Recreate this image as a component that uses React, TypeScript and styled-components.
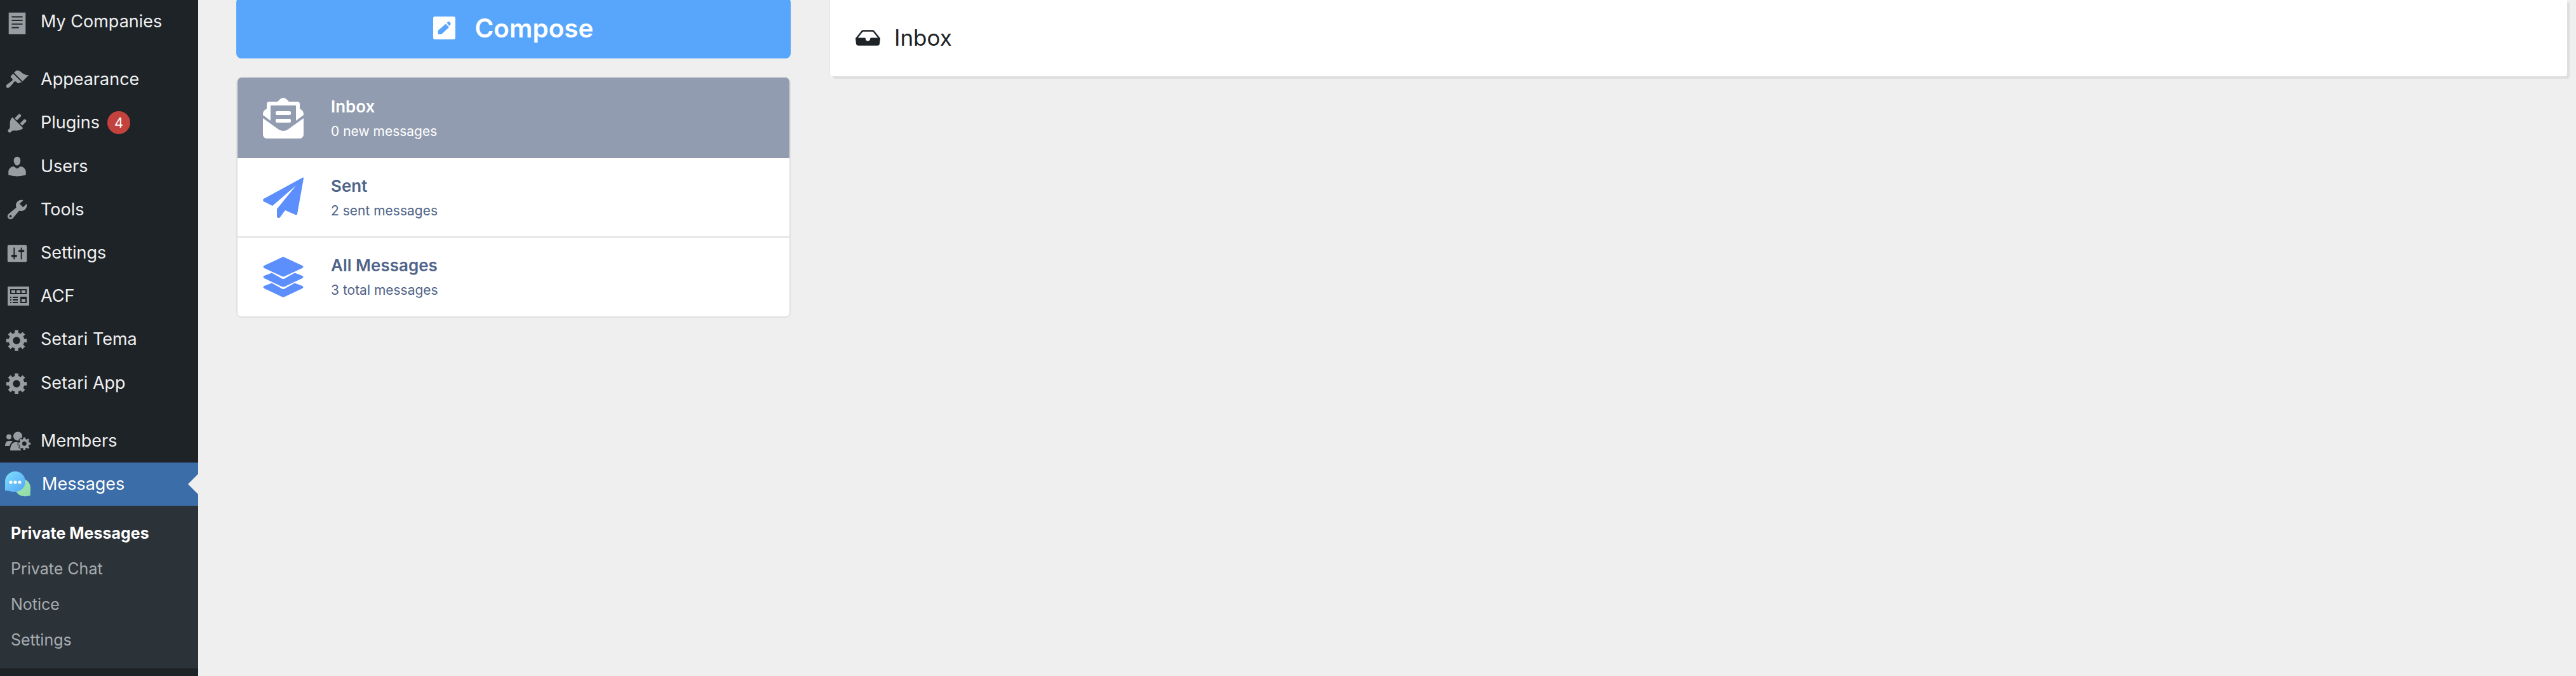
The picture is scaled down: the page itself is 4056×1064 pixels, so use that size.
import React from 'react';
import styled, { createGlobalStyle } from 'styled-components';
import { BsInboxFill } from 'react-icons/bs';

const GlobalStyle = createGlobalStyle`
  html, body {
    margin: 0;
    padding: 0;
    height: 1064px;
    overflow: hidden;
    background: #efefef;
    font-family: Inter, "Liberation Sans", sans-serif;
  }
`;

const Page = styled.div`
  display: flex;
  width: 4056px;
  height: 1064px;
  overflow: hidden;
`;

const Sidebar = styled.nav`
  flex: 0 0 312px;
  height: 1064px;
  background: #1d2327;
`;

const MenuGroup = styled.div`
  margin-bottom: 23px;
`;

const MenuRow = styled.div<{ $active?: boolean }>`
  position: relative;
  display: flex;
  align-items: center;
  height: 68.2px;
  box-sizing: border-box;
  padding: 0 0 1px 8px;
  gap: 18px;
  font-size: 27px;
  color: ${p => (p.$active ? '#fff' : '#f0f0f1')};
  background: ${p => (p.$active ? '#3b6ea9' : 'transparent')};

  svg {
    flex: 0 0 38px;
    width: 38px;
    height: 38px;
    margin-top: 2px;
    fill: #999da2;
    overflow: visible;
  }
`;

const Badge = styled.span`
  display: flex;
  align-items: center;
  justify-content: center;
  width: 36px;
  height: 36px;
  margin-left: -6px;
  border-radius: 50%;
  background: #c4423d;
  color: #fff;
  font-size: 22px;
`;

const Arrow = styled.span`
  position: absolute;
  right: 0;
  top: 18px;
  border: 16px solid transparent;
  border-left: 0;
  border-right-color: #efefef;
`;

const SubMenu = styled.div`
  display: flex;
  flex-direction: column;
  height: 256px;
  padding: 15px 0 0 17px;
  box-sizing: border-box;
  background: #2c3338;
`;

const SubItem = styled.div<{ $current?: boolean }>`
  height: 56px;
  line-height: 56px;
  font-size: 25px;
  font-weight: ${p => (p.$current ? 700 : 400)};
  color: ${p => (p.$current ? '#fff' : '#a7acb1')};
`;

const Content = styled.main`
  flex: 1;
  display: grid;
  grid-template-columns: 873px 1fr;
  column-gap: 62px;
  align-items: start;
  padding: 0 14px 0 60px;
`;

const LeftColumn = styled.div`
  display: flex;
  flex-direction: column;
  gap: 30px;
  margin-top: -4px;
`;

const ComposeButton = styled.div`
  display: flex;
  align-items: center;
  justify-content: center;
  gap: 30px;
  height: 96px;
  border-radius: 8px;
  background: #58a6fb;
  color: #fff;
  font-size: 40.5px;
  font-weight: 600;

  svg {
    width: 35px;
    height: 36px;
  }
`;

const FolderCard = styled.div`
  display: flex;
  flex-direction: column;
  border-radius: 8px;
  border: 2px solid #e0e0e0;
  border-top: 0;
  background: #fff;
  overflow: hidden;
`;

const FolderRow = styled.div<{ $active?: boolean; $height: number }>`
  display: flex;
  align-items: center;
  gap: 43px;
  height: ${p => p.$height}px;
  box-sizing: border-box;
  background: ${p => (p.$active ? '#919cb0' : '#fff')};
  color: ${p => (p.$active ? '#fff' : '#4f6489')};
  margin: ${p => (p.$active ? '0 -2px' : '0')};
  padding-left: ${p => (p.$active ? '42px' : '40px')};

  & + & + & {
    border-top: 2px solid #e0e0e0;
  }

  svg {
    flex: 0 0 64px;
    width: 64px;
    height: 64px;
    fill: ${p => (p.$active ? '#fff' : '#5d8ffc')};
  }
`;

const FolderText = styled.div`
  display: flex;
  flex-direction: column;
  gap: 12px;
  margin-top: 1px;
`;

const FolderTitle = styled.div`
  font-size: 26px;
  font-weight: 600;
  line-height: 28px;
`;

const FolderSub = styled.div`
  font-size: 21px;
  line-height: 25px;
`;

const Panel = styled.section`
  display: flex;
  align-items: center;
  gap: 22px;
  height: 120px;
  box-sizing: border-box;
  padding: 0 0 2px 40px;
  background: #fff;
  box-shadow: 4px 4px 0 #dfdfdf, -1px 0 0 #e4e4e4;
  border-radius: 0 0 4px 4px;
  color: #1d2327;
  font-size: 35px;

  svg {
    width: 39px;
    height: 39px;
  }
`;

const GEAR = 'M18 12h-2.18c-.17.7-.44 1.35-.81 1.93l1.54 1.54-2.1 2.1-1.54-1.54c-.58.36-1.23.63-1.91.79V19H8v-2.18c-.68-.16-1.33-.43-1.91-.79l-1.54 1.54-2.12-2.12 1.54-1.54c-.36-.58-.63-1.23-.79-1.91H1V9.03h2.17c.16-.7.44-1.35.8-1.94L2.43 5.55l2.1-2.1 1.54 1.54c.58-.37 1.24-.64 1.93-.81V2h3v2.18c.68.16 1.33.43 1.91.79l1.54-1.54 2.12 2.12-1.54 1.54c.36.59.64 1.24.8 1.94H18V12zm-8.5 1.5c1.66 0 3-1.34 3-3s-1.34-3-3-3-3 1.34-3 3 1.34 3 3 3z';

const Dash = ({ d }: { d: string }) => (
  <svg viewBox="0 0 20 20">
    <path fillRule="evenodd" d={d} />
  </svg>
);

const ICONS: Record<string, string> = {
  doc: 'M3 2h14v18H3zM5.500 5v1h9V5zm0 3v1h9V8zm0 3v1h9v-1zm0 3v1h6v-1z',
  brush: 'M14.48 11.06L7.41 3.99l1.5-1.5c.5-.56 2.3-.47 3.51.32 1.21.8 1.43 1.28 2.91 2.1 1.18.64 2.45 1.26 4.45.85zm-.71.71L6.7 4.7 4.93 6.47c-.39.39-.39 1.02 0 1.41l1.06 1.06c.39.39.39 1.03 0 1.42-.6.6-1.43 1.11-2.21 1.69-.35.26-.7.53-1.01.84C1.43 13.23.4 15.1 1.2 16.1c.78.99 2.65-.05 3.96-1.59.28-.3.56-.67.84-1.03.57-.76 1.08-1.57 1.68-2.17.39-.39 1.02-.39 1.41 0l1.06 1.06c.39.39 1.02.39 1.41 0z',
  plug: 'M13.11 4.36L9.87 7.6 8 5.73l3.24-3.24c.35-.34 1.05-.2 1.56.32.52.51.66 1.21.31 1.55zm-8 1.77l.91-1.12 9.01 9.01-1.19.84c-.71.71-2.63 1.16-3.82 1.16H6.14L4.9 17.26c-.59.59-1.54.59-2.12 0-.59-.58-.59-1.53 0-2.12l1.24-1.24v-3.88c0-1.13.4-3.19 1.09-3.89zm7.26 3.97l3.24-3.24c.34-.35 1.04-.21 1.55.31.52.51.66 1.21.31 1.55l-3.24 3.25z',
  user: 'M10 9.25c-2.27 0-2.73-3.44-2.73-3.44C7 4.02 7.82 2 9.97 2c2.16 0 2.98 2.02 2.71 3.81 0 0-.41 3.44-2.68 3.44zm0 2.57L12.72 10c2.39 0 4.52 2.33 4.52 4.53v2.49s-3.65 1.13-7.24 1.13c-3.65 0-7.24-1.13-7.24-1.13v-2.49c0-2.25 1.94-4.48 4.47-4.48z',
  wrench: 'M16.68 9.77c-1.34 1.34-3.3 1.67-4.95.99l-5.41 6.52c-.99.99-2.59.99-3.58 0s-.99-2.59 0-3.57l6.52-5.42c-.68-1.65-.35-3.61.99-4.95 1.28-1.28 3.12-1.62 4.72-1.06l-2.89 2.89 2.82 2.82 2.86-2.87c.53 1.58.18 3.39-1.08 4.65zM3.81 16.21c.4.39 1.04.39 1.43 0 .4-.4.4-1.04 0-1.43-.39-.4-1.03-.4-1.43 0-.39.39-.39 1.03 0 1.43z',
  sliders: 'M18 16V4c0-.55-.45-1-1-1H3c-.55 0-1 .45-1 1v12c0 .55.45 1 1 1h14c.55 0 1-.45 1-1zM8 11h1c.55 0 1 .45 1 1s-.45 1-1 1H8v1.5c0 .28-.22.5-.5.5s-.5-.22-.5-.5V13H6c-.55 0-1-.45-1-1s.45-1 1-1h1V5.500c0-.28.22-.5.5-.5s.5.22.5.5V11zm5-2h-1c-.55 0-1-.45-1-1s.45-1 1-1h1V5.500c0-.28.22-.5.5-.5s.5.22.5.5V7h1c.55 0 1 .45 1 1s-.45 1-1 1h-1v5.500c0 .28-.22.5-.5.5s-.5-.22-.5-.5V9z',
  gear: GEAR,
};

const AcfIcon = () => (
  <svg viewBox="0 0 38 38">
    <path
      fillRule="evenodd"
      d="M5 3h32a1 1 0 0 1 1 1v28a1 1 0 0 1-1 1H5a1 1 0 0 1-1-1V4a1 1 0 0 1 1-1zM8 7v8h26V7zM10 9h6v4h-6zM18 9h6v4h-6zM26 9h6v4h-6zM8 19v2h2v-2zM12 19v2h8v-2zM8 23v2h2v-2zM12 23v2h8v-2zM8 27v2h2v-2zM12 27v2h8v-2zM24 19v10h10V19zM26 23h6v4h-6z"
    />
  </svg>
);

const MembersIcon = () => (
  <svg viewBox="0 0 38 38">
    <circle cx="20" cy="11.500" r="7" />
    <circle cx="6" cy="12.500" r="4" />
    <path d="M0 27c0-4 2-8 5-8h4c1 0 2 .5 3 1-3 2-4 4-5 7z" />
    <path d="M8 34c0-7 3-13 8-13h4c3 0 5 3 5 13z" />
    <path
      fillRule="evenodd"
      stroke="#1d2327"
      strokeWidth="1.600"
      paintOrder="stroke"
      transform="translate(19.400 11.200) scale(1.150)"
      d={GEAR}
    />
  </svg>
);

const MessagesIcon = () => (
  <svg viewBox="0 0 40 40" style={{ flex: '0 0 40px', width: 40, height: 40 }}>
    <defs>
      <linearGradient id="msgBlue" x1="0" y1="0" x2="1" y2="1">
        <stop offset="0" stopColor="#7fe0fb" />
        <stop offset="1" stopColor="#52a3f7" />
      </linearGradient>
      <linearGradient id="msgGreen" x1="0" y1="0" x2="1" y2="1">
        <stop offset="0" stopColor="#a5e6b2" />
        <stop offset="1" stopColor="#8fdca9" />
      </linearGradient>
    </defs>
    <path style={{ fill: 'url(#msgGreen)' }} d="M25 12c8-1 15 5 15 14l-.3 12c-3 1-7 1.500-10 1-5 0-10-3-13-8z" />
    <path style={{ fill: 'url(#msgBlue)' }} d="M16 0c9 0 16 7 16 16s-7 16-16 16c-4 0-7-.5-11-1.500L0 30V16C0 7 7 0 16 0z" />
    <circle style={{ fill: '#fff' }} cx="9" cy="17" r="2.600" />
    <circle style={{ fill: '#fff' }} cx="16" cy="17" r="2.600" />
    <circle style={{ fill: '#fff' }} cx="23" cy="17" r="2.600" />
  </svg>
);

const ComposeIcon = () => (
  <svg viewBox="0 0 35 36">
    <path
      fill="#fff"
      fillRule="evenodd"
      d="M3 0h29a3 3 0 0 1 3 3v30a3 3 0 0 1-3 3H3a3 3 0 0 1-3-3V3a3 3 0 0 1 3-3zM7.700 22V28H13L25 17 20 11.500zM21.500 9.800L25.500 15 27 13Q28 12 27.500 10.500L26 8.500Q25 7.500 24 8z"
    />
  </svg>
);

const EnvelopeIcon = () => (
  <svg viewBox="0 0 64 64">
    <path fillRule="evenodd" d="M32 0Q35 0 37 2L41 6H54a4 4 0 0 1 4 4V17L62 20Q64 22 64 25V27L52 36V12H12V36L0 27V25Q0 22 2 20L6 17V10a4 4 0 0 1 4-4H23L27 2Q29 0 32 0Z" />
    <path d="M0 32L25 50Q32 54 39 50L64 32V58a6 6 0 0 1-6 6H6a6 6 0 0 1-6-6Z" />
    <rect x="20" y="21" width="24" height="6" rx="2" />
    <rect x="20" y="33" width="24" height="6" rx="2" />
  </svg>
);

const PlaneIcon = () => (
  <svg viewBox="0 0 64 64">
    <path d="M62.500 .5Q64.500 0 64 2L54 58Q53.500 60 51 59L35 52L27 63Q24 66 22 62V50L52 13L15 45L1 38Q-1 36 1 34Z" />
  </svg>
);

const LayersIcon = () => (
  <svg viewBox="0 0 64 64">
    <path d="M29.500 1.200Q32 0 34.500 1.200L62 14Q65 16 62 18L34.500 30.800Q32 32 29.500 30.800L2 18Q-1 16 2 14Z" />
    <path d="M14 25.500L30 34.500Q32 35.500 34 34.500L50 25.500L62 30Q65 32 62 34L34.500 47Q32 48 29.500 47L2 34Q-1 32 2 30Z" />
    <path d="M14 41.500L30 50.500Q32 51.500 34 50.500L50 41.500L62 46Q65 48 62 50L34.500 63Q32 64 29.500 63L2 50Q-1 48 2 46Z" />
  </svg>
);

const FOLDERS = [
  { title: 'Inbox', sub: '0 new messages', icon: <EnvelopeIcon />, height: 127, active: true },
  { title: 'Sent', sub: '2 sent messages', icon: <PlaneIcon />, height: 123 },
  { title: 'All Messages', sub: '3 total messages', icon: <LayersIcon />, height: 126 },
];

const App = () => (
  <Page>
    <GlobalStyle />
    <Sidebar>
      <MenuGroup>
        <MenuRow><Dash d={ICONS.doc} />My Companies</MenuRow>
      </MenuGroup>
      <MenuGroup>
        <MenuRow><Dash d={ICONS.brush} />Appearance</MenuRow>
        <MenuRow><Dash d={ICONS.plug} />Plugins<Badge>4</Badge></MenuRow>
        <MenuRow><Dash d={ICONS.user} />Users</MenuRow>
        <MenuRow><Dash d={ICONS.wrench} />Tools</MenuRow>
        <MenuRow><Dash d={ICONS.sliders} />Settings</MenuRow>
        <MenuRow><AcfIcon />ACF</MenuRow>
        <MenuRow><Dash d={ICONS.gear} />Setari Tema</MenuRow>
        <MenuRow><Dash d={ICONS.gear} />Setari App</MenuRow>
      </MenuGroup>
      <MenuRow><MembersIcon />Members</MenuRow>
      <MenuRow $active><MessagesIcon />Messages<Arrow /></MenuRow>
      <SubMenu>
        <SubItem $current>Private Messages</SubItem>
        <SubItem>Private Chat</SubItem>
        <SubItem>Notice</SubItem>
        <SubItem>Settings</SubItem>
      </SubMenu>
    </Sidebar>
    <Content>
      <LeftColumn>
        <ComposeButton><ComposeIcon />Compose</ComposeButton>
        <FolderCard>
          {FOLDERS.map(f => (
            <FolderRow key={f.title} $active={f.active} $height={f.height}>
              {f.icon}
              <FolderText>
                <FolderTitle>{f.title}</FolderTitle>
                <FolderSub>{f.sub}</FolderSub>
              </FolderText>
            </FolderRow>
          ))}
        </FolderCard>
      </LeftColumn>
      <Panel><BsInboxFill />Inbox</Panel>
    </Content>
  </Page>
);

export default App;
